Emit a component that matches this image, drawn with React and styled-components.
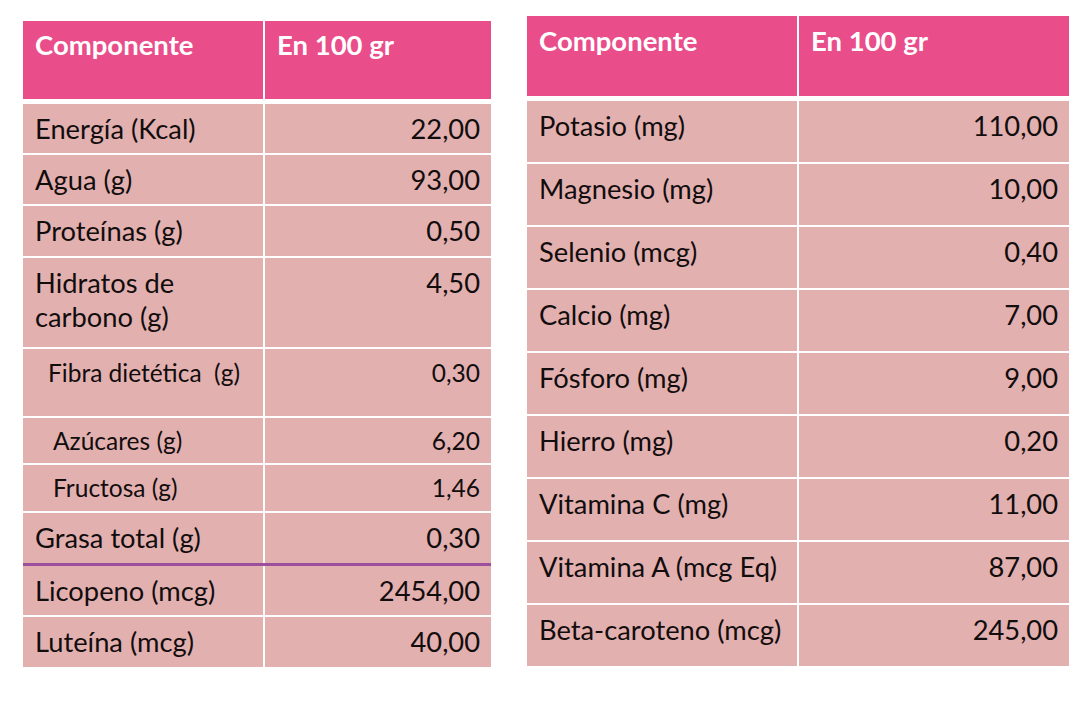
import React from 'react'
import styled, { createGlobalStyle } from 'styled-components'

const GlobalStyle = createGlobalStyle`
  html, body {
    margin: 0;
    padding: 0;
    background: #ffffff;
  }
  body {
    font-family: Lato, "Open Sans", "Liberation Sans", sans-serif;
  }
`

const Page = styled.div`
  display: flex;
  align-items: flex-start;
  gap: 36px;
  padding-left: 23px;
  width: 1090px;
  height: 706px;
  box-sizing: border-box;
`

const Table = styled.div`
  display: flex;
  flex-direction: column;
  width: ${p => p.$width}px;
  margin-top: ${p => p.$top}px;
`

const Row = styled.div`
  display: grid;
  grid-template-columns: ${p => p.$first}px 1fr;
  column-gap: 2px;
  height: ${p => p.$h}px;
  margin-top: ${p => p.$gap}px;
`

const HeadCell = styled.div`
  background: #e94d8a;
  color: #ffffff;
  font-weight: 700;
  font-size: 27.5px;
  line-height: 34px;
  padding: ${p => p.$pad}px 12px 0 12px;
`

const Cell = styled.div`
  background: #e3b0b0;
  color: #120d0d;
  font-size: ${p => (p.$sub ? 24.5 : 27.3)}px;
  line-height: ${p => (p.$sub ? 30 : 34)}px;
  padding: ${p => p.$pad}px 11px 0 ${p => 12 + (p.$indent || 0)}px;
  white-space: pre;
  text-align: ${p => (p.$num ? 'right' : 'left')};
`

const Rule = styled.div`
  height: 3px;
  background: #9b4f9c;
`

const leftRows = [
  { label: 'Energía (Kcal)', value: '22,00', h: 49, gap: 5 },
  { label: 'Agua (g)', value: '93,00', h: 49, gap: 2 },
  { label: 'Proteínas (g)', value: '0,50', h: 50, gap: 2 },
  { label: 'Hidratos de\ncarbono (g)', value: '4,50', h: 89, gap: 2 },
  { label: 'Fibra dietética  (g)', value: '0,30', h: 67, gap: 2, sub: true, indent: 13, pad: 9 },
  { label: 'Azúcares (g)', value: '6,20', h: 45, gap: 2, sub: true, indent: 18, pad: 8 },
  { label: 'Fructosa (g)', value: '1,46', h: 46, gap: 2, sub: true, indent: 18, pad: 8 },
  { label: 'Grasa total (g)', value: '0,30', h: 50, gap: 2, rule: true },
  { label: 'Licopeno (mcg)', value: '2454,00', h: 49, gap: 0 },
  { label: 'Luteína (mcg)', value: '40,00', h: 50, gap: 2 },
]

const rightRows = [
  ['Potasio (mg)', '110,00'],
  ['Magnesio (mg)', '10,00'],
  ['Selenio (mcg)', '0,40'],
  ['Calcio (mg)', '7,00'],
  ['Fósforo (mg)', '9,00'],
  ['Hierro (mg)', '0,20'],
  ['Vitamina C (mg)', '11,00'],
  ['Vitamina A (mcg Eq)', '87,00'],
  ['Beta-caroteno (mcg)', '245,00'],
].map(([label, value], i) => ({ label, value, h: 61, gap: i === 0 ? 5 : 2 }))

function NutrientTable({ width, top, first, headH, headPad, rows }) {
  return (
    <Table $width={width} $top={top}>
      <Row $first={first} $h={headH} $gap={0}>
        <HeadCell $pad={headPad}>Componente</HeadCell>
        <HeadCell $pad={headPad}>En 100 gr</HeadCell>
      </Row>
      {rows.map(r => (
        <React.Fragment key={r.label}>
          <Row $first={first} $h={r.h} $gap={r.gap}>
            <Cell $sub={r.sub} $indent={r.indent} $pad={r.pad ?? 8}>{r.label}</Cell>
            <Cell $sub={r.sub} $num $pad={r.pad ?? 8}>{r.value}</Cell>
          </Row>
          {r.rule && <Rule />}
        </React.Fragment>
      ))}
    </Table>
  )
}

export default function App() {
  return (
    <>
      <GlobalStyle />
      <Page>
        <NutrientTable width={468} top={21} first={240} headH={78} headPad={7} rows={leftRows} />
        <NutrientTable width={542} top={16} first={270} headH={80} headPad={8} rows={rightRows} />
      </Page>
    </>
  )
}
